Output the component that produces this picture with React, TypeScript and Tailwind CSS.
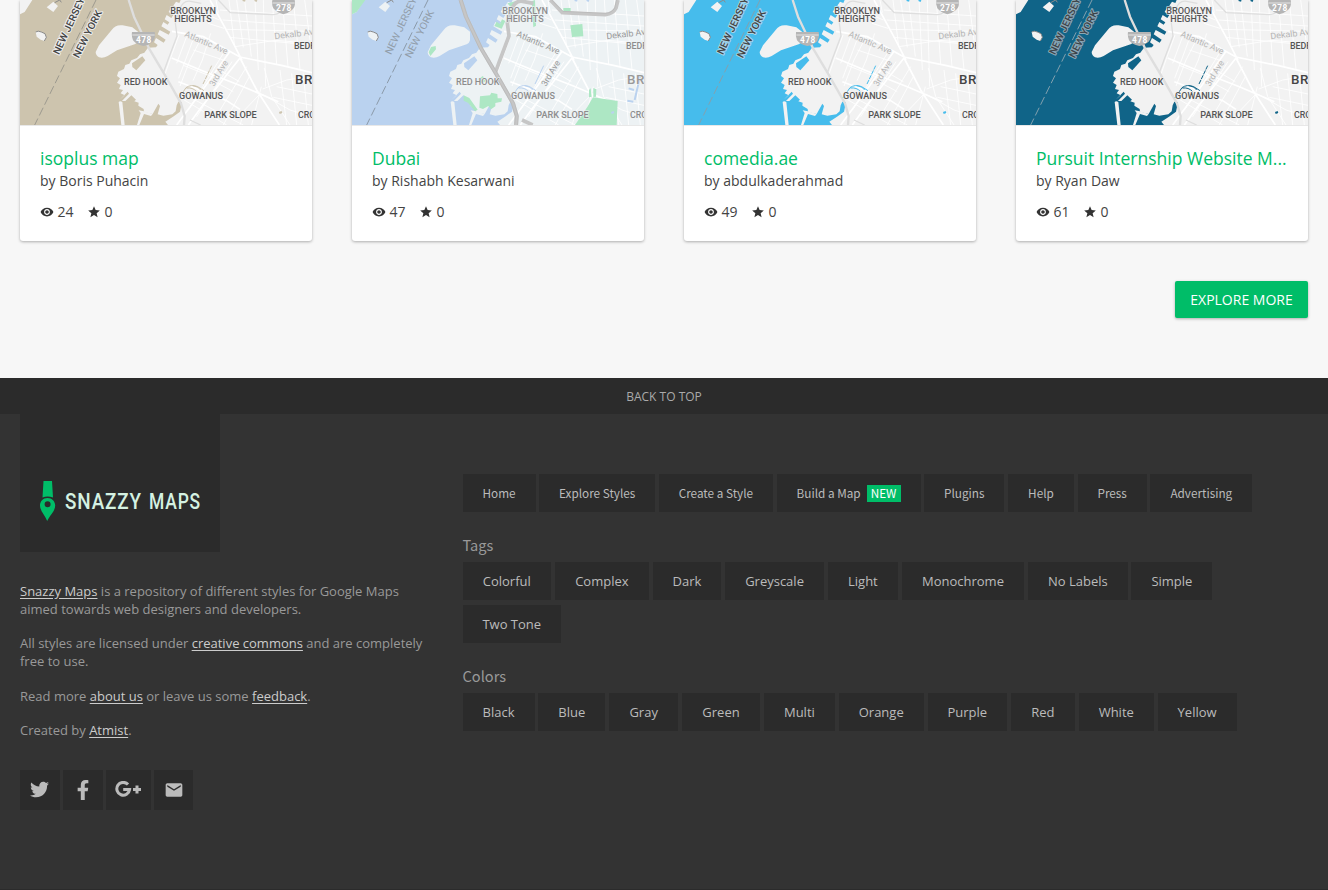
import React from "react";
import { MdRemoveRedEye, MdStar, MdEmail } from "react-icons/md";
import { FaTwitter, FaFacebookF } from "react-icons/fa";

type Theme = { water: string; land: string; road: string; major: string; green?: string; label: string; strong: string; halo: string; dash: string };

const themes: Theme[] = [
  { water: "#cdc4ae", land: "#f2f2f2", road: "#ffffff", major: "#dedede", label: "#555", strong: "#444", halo: "#eeeeee", dash: "#9d9a8f" },
  { water: "#bad2ef", land: "#edf2f4", road: "#ffffff", major: "#c6c6c6", green: "#ade7c4", label: "#8d8d8d", strong: "#999", halo: "#bad2ef", dash: "#8b9aa9" },
  { water: "#46bcec", land: "#f2f2f2", road: "#ffffff", major: "#dedede", label: "#555", strong: "#444", halo: "#a8d4ea", dash: "#83a1af" },
  { water: "#106488", land: "#f2f2f2", road: "#ffffff", major: "#dedede", label: "#555", strong: "#3d4348", halo: "#8ba7b6", dash: "#83a1af" },
];

function MapPicture({ t }: { t: Theme }) {
  const g = !!t.green;
  const lab = { fontFamily: "Roboto, sans-serif", fontWeight: 500, fontSize: 25, fill: t.label, stroke: t.land, strokeWidth: 3, paintOrder: "stroke" as const, lengthAdjust: "spacingAndGlyphs" as const };
  const ave = { fontFamily: "Roboto, sans-serif", fontSize: 26, fill: g ? "#999" : "#b5b5b5", stroke: t.land, strokeWidth: 3, paintOrder: "stroke" as const, lengthAdjust: "spacingAndGlyphs" as const };
  return (
    <svg viewBox="30 0 876 375" className="block h-[125px] w-full" preserveAspectRatio="none">
      <rect x="30" width="880" height="375" fill={t.water} />
      <path fill={t.land} d="M906 0H512L508 9 498 5 490 17 501 23 496 31 483 23 476 36 490 45 484 54 470 45 464 58 478 67 473 74 460 66 454 79 481 95 476 104 449 90 443 103 467 119 461 128 438 114 432 127 443 135 438 142 414 143 403 158 390 163 381 174 364 181 358 191 346 195 342 207 325 215 321 228 330 235 321 248 332 255 327 267 339 270 332 280 344 286 329 299 353 275 357 281 335 304 340 309 364 286 378 299 373 304 386 308 385 317 401 327 402 336 428 342 445 311 450 318 443 343 460 347 487 343 497 334 500 316 505 305 516 306 510 335 489 350 466 365 474 375H906Z" />
      <path fill={t.land} d="M257 156 267 136 305 90Q316 73 338 76L367 82 384 95 384 121Q382 130 374 133L321 151 293 168Q279 176 267 172 257 166 257 156ZM77 96Q84 91 94 96L105 101 109 112 103 123 92 119 80 110ZM110 22 130 5 144 18 130 36ZM30 0H67L44 36 30 43Z" />
      <path fill={t.water} d="M327 303H364L377 318 398 333 404 336 400 375H332Z" />
      <path fill={t.land} d="M326 306Q330 302 337 306L344 375H334ZM386 331 402 334 428 342 423 348 402 342 388 375H381L392 339Z" />
      <path fill={t.water} d="M366 190 397 169 406 181 379 211 367 201Z" />
      <g fill="none" stroke={t.road} strokeWidth="5">
        <path d="M486 94 580 110 690 171 818 197 906 218M690 174 740 270 808 375M690 174 575 320 535 375M660 154 575 274 500 375M485 174 577 212 700 260 805 305M505 245 577 272 650 302 690 328M600 0 664 118 696 181" />
        <path strokeWidth="2.5" d="M507 105 485 165 463 228M529 112 500 190M551 114 506 235M577 108 540 180 510 258M602 100 577 180 549 242M630 30 906 48M638 60 906 78M650 88 906 94M658 112 906 135M675 140 795 121 906 130M657 0 674 140M680 0 700 142M704 0 724 170M735 0 745 210M760 0 767 260M787 0 800 193M817 0 834 200M850 0 870 209M884 0 900 120M754 260 725 375M748 284 704 330 690 375M758 267 830 240 906 228M755 282 840 330 906 350M763 204 785 290 840 375M810 210 830 375M845 220 860 375M880 220 895 375M628 210 688 245M605 240 670 275M640 160 535 330M666 185 560 350M710 200 615 355M720 226 640 375M555 300 650 350 700 375M506 290 590 340 650 375M800 260 906 282M790 292 906 316M618 0 625 38M583 40 628 60M594 70 642 85M550 150 640 180M520 196 610 232" />
      </g>
      {g && <path fill={t.green} d="M30 0H70L44 36 30 43ZM260 157 267 141 281 138 282 148 265 168ZM414 289 444 286 448 278 466 282 467 295 480 295 478 305 460 309 460 319 447 328 439 318 423 327 412 323ZM685 76 721 72 724 109 690 111ZM699 375 736 321 753 292 827 303 824 375ZM741 270 746 265 749 290 741 292ZM754 264 763 268 762 290 754 291ZM457 78 464 65 474 72 480 58 490 63 479 86ZM496 10 520 4 508 23ZM664 24H686V36H664ZM365 286 382 294 407 329 399 334 378 308 365 302ZM409 236 423 228 430 244 416 252ZM569 4 579 0 582 77 574 82Z" />}
      <g fill="none" stroke={t.major} strokeWidth={g ? 12 : 7} strokeLinejoin="round">
        <path d="M356 0 372 50 417 145 464 224 513 310 524 348 522 375" />
        <path strokeWidth={g ? 11 : 4} d="M460 218 475 177 501 108 496 69 508 30Q519 0 542 4L574 10M625 0 661 38 790 44Q814 41 822 24L828 0M540 360 572 375" />
      </g>
      {g && <path fill="none" stroke="#b0b0b0" strokeWidth="1.5" d="M351 0 367 50 412 145 459 224 508 310 520 348 518 375M361 0 377 50 422 145 469 224 518 310 529 348 527 375M629 0 663 34 790 40Q811 38 818 24L823 0" />}
      <g fill="none" stroke={t.water} strokeWidth="3">
        <path d="M507 294 528 263Q543 252 563 260L582 272M529 264Q548 262 559 274M549 257Q566 259 572 270" />
        <path d="M579 252 605 197" strokeDasharray={g ? "none" : "13 3"} />
        <path d="M698 0 706 2M734 0 741 3M808 339 816 336" strokeWidth="6" />
        {g && <path d="M895 226 878 300M860 265 876 270M856 302 874 305" strokeWidth="6" />}
      </g>
      <path d="M258 0 74 375" stroke={t.dash} strokeWidth="3" fill="none" strokeDasharray="26 10" />
      <path d="M77 96Q84 91 94 96L105 101 109 112 103 123M134 8 149 0 154 7" fill="none" stroke="#8b8b8b" strokeWidth="3" />
      <g fontFamily="Roboto, sans-serif" fontWeight={g ? 400 : 500} fontSize="30" fill={g ? "#919da9" : t.strong} stroke={t.halo} strokeWidth="6" paintOrder="stroke" strokeLinejoin="round">
        <text transform="translate(147 166) rotate(-65)" textLength="185" lengthAdjust="spacingAndGlyphs">NEW JERSEY</text>
        <text transform="translate(206 176) rotate(-63)" textLength="156" lengthAdjust="spacingAndGlyphs">NEW YORK</text>
      </g>
      {!g && <g fontFamily="Roboto, sans-serif" fontWeight="700" fontSize="25" fill="#fff">
        <path d="M366 96H434Q438 114 428 125 416 136 400 138 377 133 369 121 364 109 366 96ZM787 0H854Q858 20 846 30 834 40 820 43 801 38 790 25 784 13 787 0Z" fill="#b5b5b5" />
        <path d="M367 105H434M787 9H854" stroke="#fff" strokeWidth="2" />
        <text x="378" y="130" textLength="46">478</text><text x="798" y="33" textLength="46">278</text>
      </g>}
      <text {...lab} x="481" y="42" textLength="137">BROOKLYN</text>
      <text {...lab} x="493" y="67" textLength="112">HEIGHTS</text>
      <text {...lab} x="342" y="254" textLength="130">RED HOOK</text>
      <text {...lab} x="507" y="297" textLength="132">GOWANUS</text>
      <text {...lab} x="583" y="353" textLength="157">PARK SLOPE</text>
      <text {...lab} x="852" y="148" textLength="116">BEDFORD</text>
      <text {...lab} x="864" y="353" textLength="94">CROWN</text>
      <text {...lab} x="855" y="252" fontSize="40" fontWeight="500" fill={g ? "#999" : "#444"} letterSpacing="1.5">BROOKLYN</text>
      <text {...ave} transform="translate(522 109) rotate(23)" textLength="138">Atlantic Ave</text>
      <text {...ave} transform="translate(612 260) rotate(-59)" textLength="84">3rd Ave</text>
      <text {...ave} transform="translate(794 118) rotate(-7)" textLength="132">Dekalb Ave</text>
    </svg>
  );
}

const cards = [
  ["isoplus map", "Boris Puhacin", "24"],
  ["Dubai", "Rishabh Kesarwani", "47"],
  ["comedia.ae", "abdulkaderahmad", "49"],
  ["Pursuit Internship Website M...", "Ryan Daw", "61"],
];

const nav: [string, string][] = [["Home", "w-[73px]"], ["Explore Styles", "w-[116px]"], ["Create a Style", "w-[114px]"], ["Build a Map", "w-[144px]"], ["Plugins", "w-[80px]"], ["Help", "w-[66px]"], ["Press", "w-[69px]"], ["Advertising", "w-[102px]"]];
const tags: [string, string][] = [["Colorful", "w-[88.5px]"], ["Complex", "w-[94px]"], ["Dark", "w-[68.5px]"], ["Greyscale", "w-[99px]"], ["Light", "w-[70px]"], ["Monochrome", "w-[122.5px]"], ["No Labels", "w-[99.5px]"], ["Simple", "w-[81px]"], ["Two Tone", "w-[98.5px]"]];
const colors: [string, string][] = [["Black", "w-[72px]"], ["Blue", "w-[67px]"], ["Gray", "w-[69px]"], ["Green", "w-[78px]"], ["Multi", "w-[71px]"], ["Orange", "w-[85px]"], ["Purple", "w-[79.5px]"], ["Red", "w-[64px]"], ["White", "w-[75px]"], ["Yellow", "w-[79px]"]];

function Chips({ items }: { items: [string, string][] }) {
  return (
    <div className="flex flex-wrap gap-x-[3.85px] gap-y-[4.5px] text-[13px]">
      {items.map(([label, w]) => (
        <a key={label} className={`flex h-[38px] items-center justify-center whitespace-nowrap bg-[#2b2b2b] pt-[1.5px] text-[#bbb] ${w}`}>{label}</a>
      ))}
    </div>
  );
}

function Link({ children }: { children: React.ReactNode }) {
  return <a className="text-[#ccc] underline underline-offset-2">{children}</a>;
}

export default function App() {
  return (
    <div className="h-[890px] w-[1328px] overflow-hidden bg-[#f7f7f7] font-['Open_Sans',sans-serif] text-[#444]">
      <main className="h-[378px] px-5">
        <div className="grid grid-cols-4 gap-10">
          {cards.map(([title, author, views], i) => (
            <article key={title} className="h-[241px] w-[292px] overflow-hidden rounded-b-[3px] bg-white shadow-[0_1px_3px_rgba(0,0,0,0.3)]">
              <MapPicture t={themes[i]} />
              <div className="border-t border-[#e8e8e8] px-5 pt-[20px]">
                <h2 className="whitespace-nowrap text-[17.5px] leading-[25px] text-[#00bd68]">{title}</h2>
                <p className="mt-px text-[14px] leading-[18px]">by {author}</p>
                <div className="mt-[12px] flex h-[19px] items-center text-[14px]">
                  <MdRemoveRedEye size={14} color="#333" /><span className="ml-[3.5px] w-[29.5px]">{views}</span>
                  <MdStar size={14} color="#333" /><span className="ml-[3.5px]">0</span>
                </div>
              </div>
            </article>
          ))}
        </div>
        <div className="mt-10 flex justify-end">
          <button className="h-[37px] w-[133px] rounded-[2px] bg-[#00bd68] text-[14px] text-white shadow-[0_1px_3px_rgba(0,0,0,0.3)]">EXPLORE MORE</button>
        </div>
      </main>
      <footer className="h-[512px] border-b border-[#2b2b2b] bg-[#333]">
        <a className="flex h-[36px] items-center justify-center bg-[#2b2b2b] pt-[1px] text-[12px] text-[#aaa]">BACK TO TOP</a>
        <div className="flex pl-5">
          <section className="w-[442.5px]">
            <div className="flex h-[138px] w-[200px] bg-[#2b2b2b] pl-[20px] pt-[66px]">
              <svg width="161" height="41" viewBox="0 0 161 41">
                <path fill="#00bd68" d="M3.5 1H12L13 17.5Q7.5 15.5 2.5 17.5Z" />
                <path fill="#00bd68" fillRule="evenodd" d="M7.5 18C3 18 0 21.5 0 25.5 0 31 5 35 7.2 41 10 35 15.2 31 15.2 25.5 15.2 21.5 12 18 7.5 18ZM7.6 21.2A3 3 0 1 1 7.6 27.2 3 3 0 1 1 7.6 21.2Z" />
                <g fontFamily="Roboto, sans-serif" fontWeight="500" fontSize="21.5" fill="#d5f2e2">
                  <text x="25" y="28.5" textLength="77" lengthAdjust="spacingAndGlyphs" letterSpacing="1">SNAZZY</text>
                  <text x="109" y="28.5" textLength="52" lengthAdjust="spacingAndGlyphs" letterSpacing="1">MAPS</text>
                </g>
              </svg>
            </div>
            <div className="mt-[29.5px] flex flex-col gap-[16px] text-[13px] leading-[18.3px] text-[#999]">
              <p><Link>Snazzy Maps</Link> is a repository of different styles for Google Maps<br />aimed towards web designers and developers.</p>
              <p>All styles are licensed under <Link>creative commons</Link> and are completely<br />free to use.</p>
              <p>Read more <Link>about us</Link> or leave us some <Link>feedback</Link>.</p>
              <p>Created by <Link>Atmist</Link>.</p>
            </div>
            <div className="mt-[30.5px] flex gap-[3.5px] text-[#bbb]">
              <a className="flex h-10 w-[39.5px] items-center justify-center bg-[#2b2b2b]"><FaTwitter size={19} /></a>
              <a className="flex h-10 w-[39.5px] items-center justify-center bg-[#2b2b2b]"><FaFacebookF size={20} /></a>
              <a className="flex h-10 w-[44.5px] items-center justify-center bg-[#2b2b2b]">
                <svg width="26" height="17" viewBox="0 0 26 17" fill="none" stroke="currentColor" strokeWidth="3"><path d="M13 3.5A6.4 6.4 0 1 0 14.6 8.5H8.2M18 8.5H26M22 4.5V12.5" /></svg>
              </a>
              <a className="flex h-10 w-[39px] items-center justify-center bg-[#2b2b2b]"><MdEmail size={20} /></a>
            </div>
          </section>
          <section className="w-[820px] pt-[60px]">
            <nav className="flex gap-[3.7px] font-['Noto_Sans_CJK_SC',sans-serif] text-[11.75px]">
              {nav.map(([label, w]) => (
                <a key={label} className={`flex h-[38px] items-center justify-center whitespace-nowrap bg-[#2b2b2b] text-[#bbb] ${w}`}>
                  {label}{label === "Build a Map" && <span className="ml-[6px] flex h-[17px] w-[34px] items-center justify-center bg-[#00bd68] text-white">NEW</span>}
                </a>
              ))}
            </nav>
            <h3 className="mb-[7px] mt-[23px] font-['Noto_Sans_CJK_SC',sans-serif] text-[14.6px] leading-[20px] text-[#999]">Tags</h3>
            <Chips items={tags} />
            <h3 className="mb-[7px] mt-[23px] font-['Noto_Sans_CJK_SC',sans-serif] text-[14.6px] leading-[20px] text-[#999]">Colors</h3>
            <Chips items={colors} />
          </section>
        </div>
      </footer>
    </div>
  );
}
